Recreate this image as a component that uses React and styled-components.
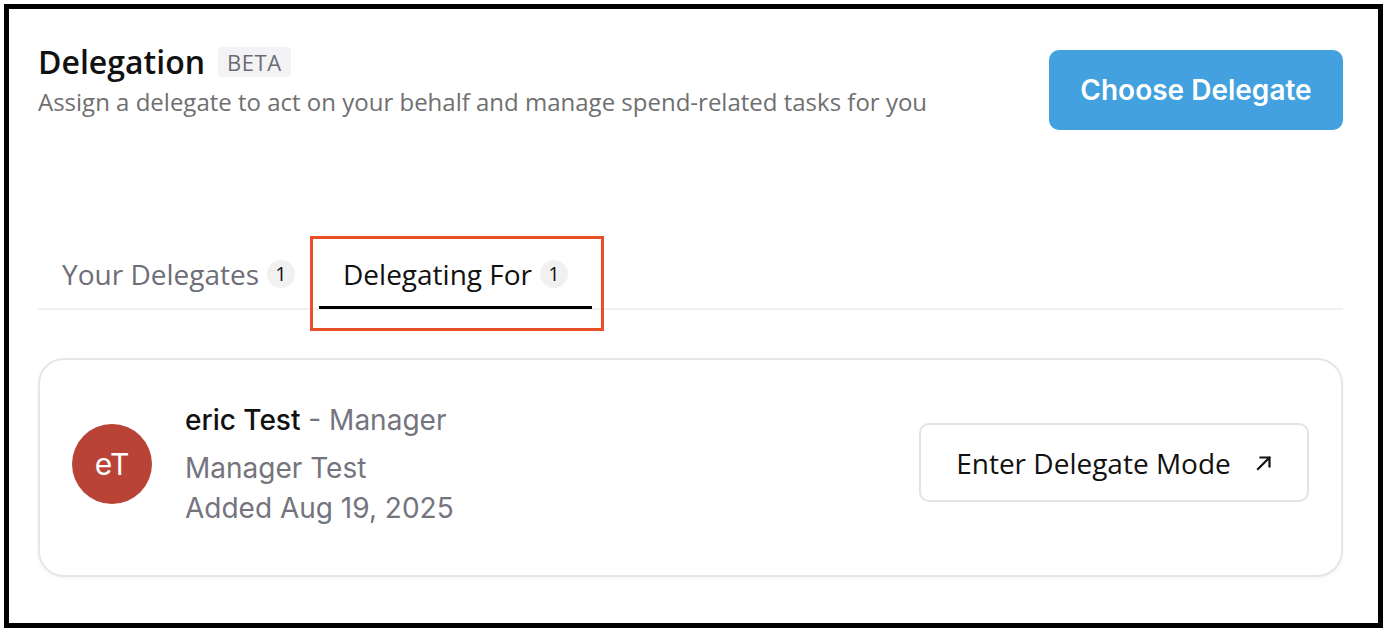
import { createGlobalStyle, styled } from "styled-components";

const GlobalStyle = createGlobalStyle`
  html, body {
    margin: 0;
    padding: 0;
    background: #ffffff;
  }
  body {
    padding: 4px;
    font-family: "Open Sans", "Liberation Sans", sans-serif;
  }
`;

const Frame = styled.div`
  box-sizing: border-box;
  width: 1379px;
  height: 624px;
  border: 5px solid #000000;
  padding: 33px 35px 0 29px;
`;

const Header = styled.div`
  display: flex;
  justify-content: space-between;
  align-items: flex-start;
`;

const TitleBlock = styled.div`
  display: flex;
  flex-direction: column;
`;

const TitleRow = styled.div`
  display: flex;
  align-items: center;
  gap: 13px;
`;

const Title = styled.h1`
  margin: 0;
  font-size: 32px;
  font-weight: 600;
  line-height: 40px;
  color: #111111;
`;

const Beta = styled.span`
  background: #f3f3f5;
  color: #6b6b76;
  font-size: 22px;
  font-weight: 500;
  letter-spacing: 0.6px;
  padding: 0 9px;
  line-height: 30px;
  border-radius: 4px;
`;

const Subtitle = styled.p`
  margin: 4px 0 0;
  font-size: 24px;
  line-height: 32px;
  color: #6f6f6f;
`;

const PrimaryButton = styled.button`
  width: 294px;
  height: 80px;
  border: none;
  border-radius: 10px;
  background: #42a1de;
  color: #ffffff;
  font-family: Inter, "Liberation Sans", sans-serif;
  font-size: 28px;
  font-weight: 600;
  cursor: pointer;
  margin-top: 8px;
`;

const Tabs = styled.div`
  display: flex;
  margin-top: 111px;
  border-bottom: 2px solid #f0f0f0;
`;

const Tab = styled.div`
  position: relative;
  display: flex;
  align-items: center;
  gap: 8px;
  padding: 0 24px;
  height: 68px;
  box-sizing: border-box;
  font-size: 28px;
  color: ${({ $active }) => ($active ? "#111111" : "#6e6e78")};
  border-bottom: 3px solid ${({ $active }) => ($active ? "#000000" : "transparent")};
  margin-bottom: -1px;
`;

const Count = styled.span`
  display: inline-flex;
  align-items: center;
  justify-content: center;
  width: 28px;
  height: 28px;
  border-radius: 50%;
  background: #f1f1f2;
  color: #111111;
  font-size: 20px;
`;

/* annotation box drawn over the active tab */
const Highlight = styled.div`
  position: absolute;
  left: -9px;
  top: -5px;
  width: 294px;
  height: 95px;
  box-sizing: border-box;
  border: 3px solid #e84e27;
  pointer-events: none;
`;

const Card = styled.div`
  margin-top: 48px;
  box-sizing: border-box;
  height: 219px;
  border: 2px solid #e6e6e6;
  border-radius: 26px;
  box-shadow: 0 2px 4px rgba(0, 0, 0, 0.04);
  display: flex;
  align-items: center;
  justify-content: space-between;
  padding: 0 32px;
`;

const Person = styled.div`
  display: flex;
  align-items: center;
  gap: 33px;
`;

const Avatar = styled.div`
  width: 80px;
  height: 80px;
  border-radius: 50%;
  background: #b94337;
  color: #ffffff;
  display: flex;
  align-items: center;
  justify-content: center;
  font-family: Inter, "Liberation Sans", sans-serif;
  font-size: 30px;
  margin-top: -8px;
`;

const Details = styled.div`
  display: flex;
  flex-direction: column;
  font-family: Inter, "Liberation Sans", sans-serif;
  font-size: 28px;
  line-height: 48px;
  color: #74747e;
  margin-top: -12px;
`;

const Name = styled.span`
  color: #111111;
  font-weight: 500;
`;

const Secondary = styled.span`
  line-height: 40px;
  margin-top: ${({ $first }) => ($first ? "4px" : "0")};
`;

const OutlineButton = styled.button`
  width: 390px;
  height: 79px;
  background: #ffffff;
  border: 2px solid #e3e3e3;
  border-radius: 10px;
  display: flex;
  align-items: center;
  justify-content: center;
  gap: 25px;
  font-family: "Open Sans", "Liberation Sans", sans-serif;
  font-size: 28px;
  color: #111111;
  cursor: pointer;
  margin-top: -10px;
`;

function ArrowUpRight() {
  return (
    <svg width="16" height="16" viewBox="0 0 16 16" fill="none">
      <path d="M2 14L13.5 2.5M4.5 2.5h9v9" stroke="#111111" strokeWidth="2.2" strokeLinecap="square" />
    </svg>
  );
}

export default function App() {
  return (
    <>
      <GlobalStyle />
      <Frame>
        <Header>
          <TitleBlock>
            <TitleRow>
              <Title>Delegation</Title>
              <Beta>BETA</Beta>
            </TitleRow>
            <Subtitle>Assign a delegate to act on your behalf and manage spend-related tasks for you</Subtitle>
          </TitleBlock>
          <PrimaryButton>Choose Delegate</PrimaryButton>
        </Header>

        <Tabs>
          <Tab>
            Your Delegates <Count>1</Count>
          </Tab>
          <Tab $active>
            Delegating For <Count>1</Count>
            <Highlight />
          </Tab>
        </Tabs>

        <Card>
          <Person>
            <Avatar>eT</Avatar>
            <Details>
              <span>
                <Name>eric Test</Name> - Manager
              </span>
              <Secondary $first>Manager Test</Secondary>
              <Secondary>Added Aug 19, 2025</Secondary>
            </Details>
          </Person>
          <OutlineButton>
            Enter Delegate Mode
            <ArrowUpRight />
          </OutlineButton>
        </Card>
      </Frame>
    </>
  );
}
